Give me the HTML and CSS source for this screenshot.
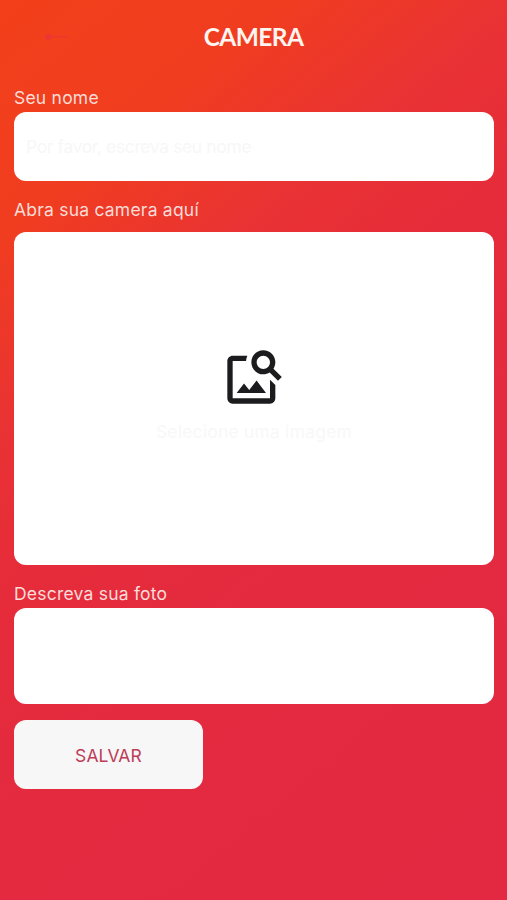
FILE: index.html
```html
<!DOCTYPE html>
<html lang="pt-BR">
<head>
    <meta charset="UTF-8">
    <meta name="viewport" content="width=device-width, initial-scale=1.0">
    <title>Camera</title>
    <link rel="stylesheet" href="styles.css">
</head>
<body>
    <header class="header">
        <a class="back" href="#" aria-label="Voltar">
            <svg width="26" height="8" viewBox="0 0 26 8">
                <path d="M0 4 L3 1 H6 L8 3 H25 V4.3 H8 L5 7 H3 Z"/>
            </svg>
        </a>
        <h1>CAMERA</h1>
    </header>
    <form class="form">
        <label class="label-nome" for="nome">Seu nome</label>
        <input type="text" id="nome" placeholder="Por favor, escreva seu nome">

        <label class="label-camera" for="camera">Abra sua camera aquí</label>
        <button type="button" id="camera" class="camera">
            <svg class="camera-icon" viewBox="0 0 24 24">
                <path d="M18 13v7H4V6h5.02c.05-.71.22-1.38.48-2H4c-1.1 0-2 .9-2 2v14c0 1.1.9 2 2 2h14c1.1 0 2-.9 2-2v-5l-2-2zm-1.5 5h-11l2.75-3.53 1.96 2.36 2.75-3.54L16.5 18zm2.8-9.11c.44-.7.7-1.51.7-2.39C20 4.01 17.99 2 15.5 2S11 4.01 11 6.5s2.01 4.5 4.49 4.5c.88 0 1.7-.26 2.39-.7L21 13.42 22.42 12 19.3 8.89zM15.5 9C14.12 9 13 7.88 13 6.5S14.12 4 15.5 4 18 5.12 18 6.5 16.88 9 15.5 9z"/>
            </svg>
            <span class="camera-text">Selecione uma imagem</span>
        </button>

        <label class="label-foto" for="foto">Descreva sua foto</label>
        <textarea id="foto"></textarea>

        <button type="submit" class="salvar">SALVAR</button>
    </form>
</body>
</html>
```

FILE: styles.css
```css
* {
    box-sizing: border-box;
    margin: 0;
    padding: 0;
}

body {
    min-height: 100vh;
    font-family: Inter, "Liberation Sans", sans-serif;
    font-size: 17.5px;
    background: linear-gradient(140deg, #f3401a 0%, #f03d20 18%, #e93234 33%, #e62c3a 45%, #e32a3f 62%, #e32941 100%);
}

.header {
    display: grid;
    grid-template-columns: 1fr auto 1fr;
    align-items: center;
    height: 73px;
}

.header h1 {
    color: #fff5f0;
    font-family: Lato, sans-serif;
    font-size: 24.5px;
    font-weight: 700;
    line-height: 30px;
    letter-spacing: -0.6px;
}

.back {
    display: flex;
    margin-left: 44px;
}

.back svg {
    fill: #e5304a;
    opacity: 0.5;
}

.form {
    display: flex;
    flex-direction: column;
    padding: 0 13px 0 14px;
}

label {
    color: #fbdcd8;
    line-height: 22px;
    letter-spacing: 0.22px;
}

.label-nome {
    margin: 14px 0 3px;
}

.label-camera {
    margin: 18px 0 11px;
}

.label-foto {
    margin: 18px 0 3px;
}

input,
textarea,
.camera,
.salvar {
    border: none;
    border-radius: 12px;
    background-color: #fff;
    font: inherit;
}

input {
    height: 69px;
    padding: 0 12px;
    letter-spacing: -0.38px;
}

input::placeholder {
    color: #f7f7f8;
    opacity: 1;
}

.camera {
    display: flex;
    flex-direction: column;
    align-items: center;
    height: 333px;
    padding-top: 113px;
}

.camera-icon {
    width: 64px;
    height: 64px;
    fill: #1c1c1e;
}

.camera-text {
    margin-top: 12px;
    color: #f8f8f8;
    line-height: 22px;
    letter-spacing: 0.2px;
}

textarea {
    height: 96px;
    padding: 12px;
    resize: none;
}

.salvar {
    width: 189px;
    height: 69px;
    margin-top: 16px;
    padding-top: 1px;
    background-color: #f7f7f7;
    color: #bd3c58;
    letter-spacing: 0.1px;
}
```
